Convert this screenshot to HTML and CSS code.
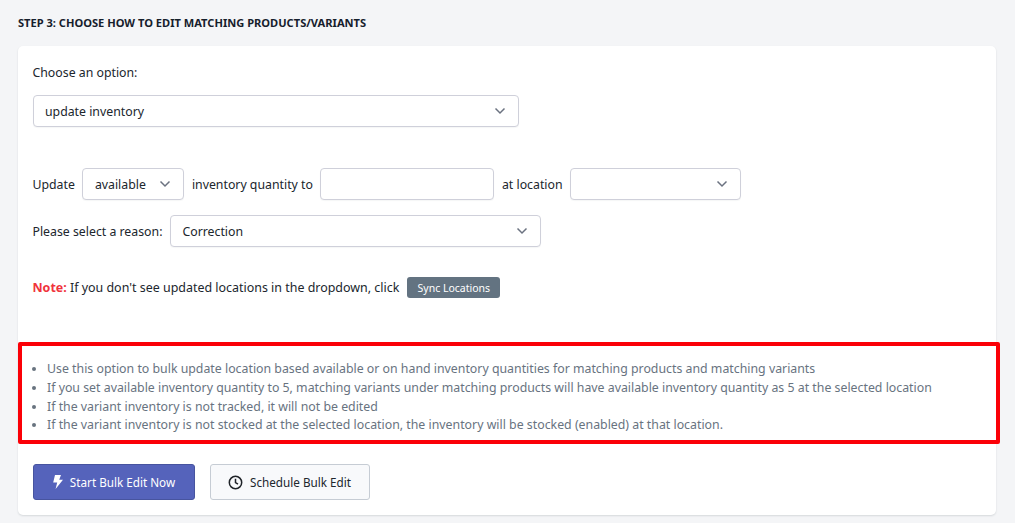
FILE: index.html
```html
<!DOCTYPE html>
<html>
<head>
	<meta charset="utf-8">
	<title>Bulk edit</title>
	<link rel="stylesheet" href="styles.css">
</head>
<body>
	<h2 class="step-title">STEP 3: CHOOSE HOW TO EDIT MATCHING PRODUCTS/VARIANTS</h2>
	<div class="card">
		<label class="opt-label">Choose an option:</label>
		<select class="sel sel-opt"><option>update inventory</option></select>

		<div class="row row-update">
			<span>Update</span>
			<select class="sel sel-avail"><option>available</option></select>
			<span>inventory quantity to</span>
			<input class="qty" type="text">
			<span>at location</span>
			<select class="sel sel-loc"><option></option></select>
		</div>
		<div class="row row-reason">
			<span>Please select a reason:</span>
			<select class="sel sel-reason"><option>Correction</option></select>
		</div>
		<div class="note">
			<span><b>Note:</b> If you don't see updated locations in the dropdown, click</span>
			<button class="btn-sync">Sync Locations</button>
		</div>

		<ul class="hints">
			<li>Use this option to bulk update location based available or on hand inventory quantities for matching products and matching variants</li>
			<li>If you set available inventory quantity to 5, matching variants under matching products will have available inventory quantity as 5 at the selected location</li>
			<li>If the variant inventory is not tracked, it will not be edited</li>
			<li>If the variant inventory is not stocked at the selected location, the inventory will be stocked (enabled) at that location.</li>
		</ul>

		<div class="actions">
			<button class="btn btn-start">
				<svg width="11" height="14" viewBox="0 0 11 14"><path d="M3 0h6L7.2 4.8H11L3.6 14l1.6-6.6H1.2z" fill="#fff"/></svg>
				Start Bulk Edit Now
			</button>
			<button class="btn btn-sched">
				<svg width="15" height="15" viewBox="0 0 15 15" fill="none" stroke="#1f2328" stroke-width="1.5"><circle cx="7.5" cy="7.5" r="6.2"/><path d="M7.5 3.8v3.9l2.5 1.5"/></svg>
				Schedule Bulk Edit
			</button>
		</div>
	</div>
</body>
</html>
```

FILE: styles.css
```css
* {
	box-sizing: border-box;
}
body {
	margin: 0;
	padding: 15px 19px 8px 18px;
	background-color: #f4f5f7;
	color: #20262d;
	font-family: "Noto Sans", "Open Sans", sans-serif;
	font-size: 12.3px;
	overflow: hidden;
}
.step-title {
	margin: 0 0 16px;
	font-size: 11.1px;
	line-height: 15px;
	font-weight: 700;
	color: #16202c;
}
.card {
	background-color: #fff;
	border-radius: 5px;
	box-shadow: 0 1px 2px rgba(30, 40, 60, 0.14);
	padding: 18px 15px 15px 14.5px;
	height: 469px;
}
.opt-label {
	display: block;
	line-height: 18px;
	margin-bottom: 13px;
}
.sel,
.qty {
	height: 32px;
	border: 1px solid #cfd0da;
	border-radius: 4px;
	background-color: #fff;
	font-family: inherit;
	font-size: 12.3px;
	color: #20262d;
	box-shadow: 0 1px 1px rgba(30, 40, 60, 0.04);
}
.sel {
	display: block;
	-webkit-appearance: none;
	appearance: none;
	padding: 0 30px 0 11.5px;
	background-image: url("data:image/svg+xml,%3Csvg xmlns='http://www.w3.org/2000/svg' width='12' height='8' viewBox='0 0 12 8'%3E%3Cpath d='M1.5 1.5L6 6l4.5-4.5' fill='none' stroke='%236b7280' stroke-width='1.5'/%3E%3C/svg%3E");
	background-repeat: no-repeat;
	background-position: right 12px center;
}
.sel-opt {
	width: 486px;
}
.sel-avail {
	width: 102px;
}
.sel-loc {
	width: 171px;
}
.sel-reason {
	width: 371px;
}
.qty {
	width: 174px;
}
.row {
	display: flex;
	align-items: center;
	gap: 7.5px;
}
.row-update {
	margin-top: 41px;
}
.row-reason {
	margin-top: 15px;
}
.note {
	display: flex;
	align-items: center;
	gap: 8px;
	margin-top: 30px;
	height: 21px;
	font-size: 12.45px;
}
.note b {
	color: #f0343c;
}
.btn-sync {
	height: 21px;
	width: 93px;
	padding: 0;
	border: 0;
	border-radius: 3px;
	background-color: #637381;
	color: #fff;
	font-family: inherit;
	font-size: 10.5px;
}
.hints {
	list-style: disc;
	margin: 44px -19px 0 -14.5px;
	padding: 13px 10px 9px 25px;
	height: 102px;
	border: 4px solid #fb0007;
	border-radius: 2px;
	color: #68737f;
	font-size: 12.33px;
	line-height: 19px;
}
.hints li:last-child {
	margin-top: -1px;
}
.hints li::marker {
	font-size: 11px;
}
.actions {
	display: flex;
	gap: 15px;
	margin-top: 20px;
}
.btn {
	display: flex;
	align-items: center;
	justify-content: center;
	gap: 7px;
	height: 36px;
	padding: 0;
	border-radius: 3px;
	font-family: inherit;
	font-size: 11.7px;
}
.btn-start {
	width: 162px;
	background-color: #5563bb;
	border: 1px solid #47549f;
	color: #fff;
}
.btn-sched {
	width: 160px;
	background-color: #f8f9fb;
	border: 1px solid #c6ccd4;
	color: #20262d;
}
```
